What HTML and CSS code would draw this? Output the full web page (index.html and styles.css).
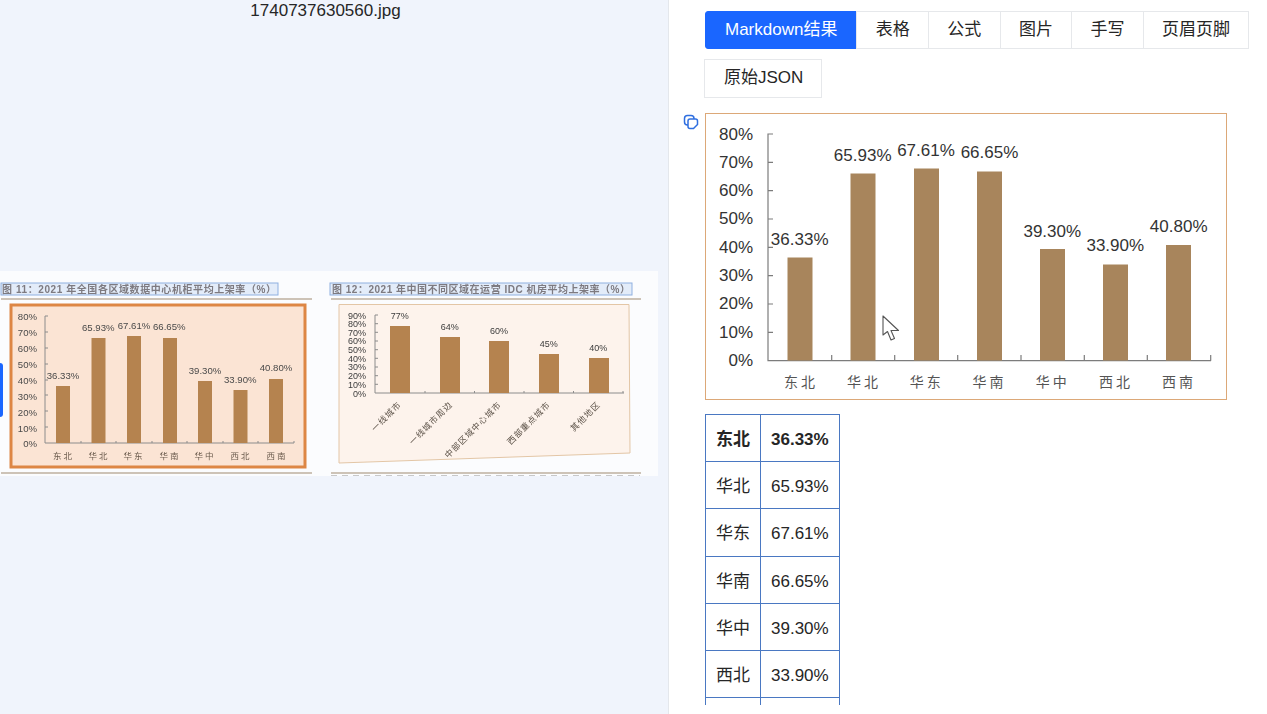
FILE: index.html
```html
<!DOCTYPE html>
<html lang="zh-CN">
<head>
  <meta charset="UTF-8">
  <title>1740737630560.jpg</title>
  <link rel="stylesheet" href="styles.css">
</head>
<body>

  <div class="left">
    <div class="file-name">1740737630560.jpg</div>
    <div class="stage">
      <svg class="page-shot" width="658" height="205" viewBox="0 271 658 205">
        <rect x="0" y="271" width="658" height="205" fill="#fbfcfe"/>

        <!-- 图 11 -->
        <rect class="cap-box" x="1" y="283" width="277" height="12"/>
        <text class="cap" x="2" y="292.5" textLength="274">图 11：2021 年全国各区域数据中心机柜平均上架率（%）</text>
        <line class="rule" x1="1" y1="299" x2="312" y2="299"/>
        <rect x="11" y="305" width="294" height="162" fill="#fbe4d4" stroke="#dd8644" stroke-width="3"/>
        <path class="axis" d="M48 316H45V443H294M45 332H48M45 348H48M45 364H48M45 380H48M45 395H48M45 411H48M45 427H48M81 443V441M116 443V441M152 443V441M187 443V441M223 443V441M258 443V441M294 443V441"/>
        <g class="bar-s">
          <rect x="56" y="386" width="14" height="57"/>
          <rect x="91.5" y="338" width="14" height="105"/>
          <rect x="127" y="336" width="14" height="107"/>
          <rect x="163" y="338" width="14" height="105"/>
          <rect x="198" y="381" width="14" height="62"/>
          <rect x="233.5" y="390" width="14" height="53"/>
          <rect x="269" y="379" width="14" height="64"/>
        </g>
        <g class="num-s end">
          <text x="37" y="320">80%</text>
          <text x="37" y="336">70%</text>
          <text x="37" y="352">60%</text>
          <text x="37" y="368">50%</text>
          <text x="37" y="384">40%</text>
          <text x="37" y="399.500">30%</text>
          <text x="37" y="415.500">20%</text>
          <text x="37" y="431.500">10%</text>
          <text x="37" y="447">0%</text>
        </g>
        <g class="num-s mid">
          <text x="63" y="378.500">36.33%</text>
          <text x="98.300" y="331">65.93%</text>
          <text x="134" y="328.500">67.61%</text>
          <text x="169.300" y="330">66.65%</text>
          <text x="205" y="374">39.30%</text>
          <text x="240.300" y="382.500">33.90%</text>
          <text x="276" y="371">40.80%</text>
        </g>
        <g class="cat-s mid">
          <text x="63.500" y="459">东北</text>
          <text x="99" y="459">华北</text>
          <text x="134" y="459">华东</text>
          <text x="170" y="459">华南</text>
          <text x="205" y="459">华中</text>
          <text x="241" y="459">西北</text>
          <text x="277" y="459">西南</text>
        </g>
        <line class="rule" x1="1" y1="473" x2="312" y2="473"/>

        <!-- 图 12 -->
        <rect class="cap-box" x="330" y="283" width="302" height="12"/>
        <text class="cap" x="332" y="292.500" textLength="298">图 12：2021 年中国不同区域在运营 IDC 机房平均上架率（%）</text>
        <line class="rule" x1="331" y1="299" x2="641" y2="299"/>
        <polygon points="339,304.500 629,304.500 630,453 339,463" fill="#fdf3ec" stroke="#e3c6a6"/>
        <path class="axis" d="M378 315H375V393H624M375 323.700H378M375 332.300H378M375 341H378M375 349.700H378M375 358.300H378M375 367H378M375 375.700H378M375 384.300H378M425 393V391M474.500 393V391M524 393V391M573.500 393V391M623 393V391"/>
        <g class="bar-s">
          <rect x="390" y="326" width="20" height="67"/>
          <rect x="440" y="337" width="20" height="56"/>
          <rect x="489" y="341" width="20" height="52"/>
          <rect x="539" y="354" width="20" height="39"/>
          <rect x="589" y="358" width="20" height="35"/>
        </g>
        <g class="num-t end">
          <text x="366" y="318.500">90%</text>
          <text x="366" y="327">80%</text>
          <text x="366" y="335.700">70%</text>
          <text x="366" y="344.400">60%</text>
          <text x="366" y="353">50%</text>
          <text x="366" y="361.700">40%</text>
          <text x="366" y="370.400">30%</text>
          <text x="366" y="379">20%</text>
          <text x="366" y="387.700">10%</text>
          <text x="366" y="396.500">0%</text>
        </g>
        <g class="num-t mid">
          <text x="399.700" y="319">77%</text>
          <text x="449.700" y="330">64%</text>
          <text x="499" y="333.500">60%</text>
          <text x="548.700" y="347">45%</text>
          <text x="598.300" y="351">40%</text>
        </g>
        <g class="cat-t">
          <text transform="rotate(-45 402 405)" x="402" y="405">一线城市</text>
          <text transform="rotate(-45 453 405)" x="453" y="405">一线城市周边</text>
          <text transform="rotate(-45 502 405)" x="502" y="405">中部区域中心城市</text>
          <text transform="rotate(-45 551 405)" x="551" y="405">西部重点城市</text>
          <text transform="rotate(-45 601 405)" x="601" y="405">其他地区</text>
        </g>
        <line class="rule" x1="331" y1="473" x2="641" y2="473"/>
        <line x1="331" y1="475.500" x2="640" y2="475.500" stroke="#c8c8c8" stroke-dasharray="6 5"/>
      </svg>
    </div>
    <div class="side-tab"></div>
  </div>

  <div class="right">
    <div class="tabs">
      <div class="tab active">Markdown结果</div>
      <div class="tab">表格</div>
      <div class="tab">公式</div>
      <div class="tab">图片</div>
      <div class="tab">手写</div>
      <div class="tab">页眉页脚</div>
      <div class="tab json">原始JSON</div>
    </div>

    <div class="result">
      <svg class="copy-icon" width="16" height="16" viewBox="0 0 16 16">
        <rect x="1.500" y="1.500" width="9.500" height="9.500" rx="3" fill="none" stroke="#2f6fe0" stroke-width="1.500"/>
        <path d="M7 5H12.500A2 2 0 0 1 14.500 7V10.500L10.500 14.500H7A2 2 0 0 1 5 12.500V7A2 2 0 0 1 7 5Z" fill="#fff" stroke="#2f6fe0" stroke-width="1.500"/>
      </svg>

      <svg class="big-chart" width="522" height="287" viewBox="706 114 520 285">
        <path class="axis-b" d="M773 134H768V360.700H1211M768 162.400H773M768 190.700H773M768 219H773M768 247.400H773M768 275.700H773M768 304H773M768 332.400H773M831.700 360.700V355M894.700 360.700V355M957.700 360.700V355M1021 360.700V355M1084.300 360.700V355M1147.300 360.700V355M1210.700 360.700V355"/>
        <g class="bar-b">
          <rect x="787.500" y="257.500" width="25" height="103"/>
          <rect x="850.500" y="173.500" width="25" height="187"/>
          <rect x="914" y="168.500" width="25" height="192"/>
          <rect x="977" y="171.500" width="25" height="189"/>
          <rect x="1040" y="249" width="25" height="111.500"/>
          <rect x="1103" y="264.500" width="25" height="96"/>
          <rect x="1166" y="245" width="25" height="115.500"/>
        </g>
        <g class="num-b end">
          <text x="753" y="139.500">80%</text>
          <text x="753" y="167.500">70%</text>
          <text x="753" y="196">60%</text>
          <text x="753" y="224">50%</text>
          <text x="753" y="252.500">40%</text>
          <text x="753" y="280.500">30%</text>
          <text x="753" y="309">20%</text>
          <text x="753" y="337.500">10%</text>
          <text x="753" y="366">0%</text>
        </g>
        <g class="num-b mid">
          <text x="799.700" y="244.500">36.33%</text>
          <text x="862.700" y="160.500">65.93%</text>
          <text x="926" y="156">67.61%</text>
          <text x="989.500" y="158">66.65%</text>
          <text x="1052.300" y="236.500">39.30%</text>
          <text x="1115.300" y="251">33.90%</text>
          <text x="1178.700" y="231.500">40.80%</text>
        </g>
        <g class="cat-b mid">
          <text x="801" y="387">东北</text>
          <text x="864" y="387">华北</text>
          <text x="926.700" y="387">华东</text>
          <text x="989.500" y="387">华南</text>
          <text x="1052.700" y="387">华中</text>
          <text x="1116" y="387">西北</text>
          <text x="1179" y="387">西南</text>
        </g>
      </svg>

      <table class="data">
        <tr><th>东北</th><th>36.33%</th></tr>
        <tr><td>华北</td><td>65.93%</td></tr>
        <tr><td>华东</td><td>67.61%</td></tr>
        <tr><td>华南</td><td>66.65%</td></tr>
        <tr><td>华中</td><td>39.30%</td></tr>
        <tr><td>西北</td><td>33.90%</td></tr>
        <tr><td></td><td></td></tr>
      </table>
    </div>
  </div>

  <svg class="cursor" width="20" height="28" viewBox="0 0 20 28">
    <path d="M1 1V20L5.500 16.500L9 25L12.500 23.500L9 15.500L16.500 15.500Z" fill="#fff" stroke="#555" stroke-width="1.100" stroke-linejoin="round"/>
  </svg>

</body>
</html>
```

FILE: styles.css
```css
* {
  box-sizing: border-box;
}

html, body {
  height: 100%;
}

body {
  margin: 0;
  display: flex;
  overflow: hidden;
  position: relative;
  background: #fff;
  color: #262626;
  font-family: "Liberation Sans", "Noto Sans CJK SC", sans-serif;
}

.left {
  width: 669px;
  flex-shrink: 0;
  display: flex;
  flex-direction: column;
  position: relative;
  background: #f0f4fc;
  border-right: 1px solid #e4e7ec;
}

.file-name {
  height: 20px;
  padding-right: 17px;
  text-align: center;
  font-size: 17px;
  line-height: 22px;
}

.stage {
  flex: 1;
  padding-top: 251px;
}

.page-shot {
  display: block;
  filter: blur(0.35px);
}

.side-tab {
  position: absolute;
  left: 0;
  top: 363px;
  width: 3px;
  height: 54px;
  background: #1a66ff;
  border-radius: 0 4px 4px 0;
}

/* charts inside the scanned page */
.cap-box {
  fill: #e3ecf9;
  stroke: #8fb0e0;
}

.cap {
  font-size: 10px;
  font-weight: 700;
  fill: #7d7a80;
}

.rule {
  stroke: #a08a70;
  stroke-width: 1.2;
}

.axis {
  fill: none;
  stroke: #8c8c8c;
}

.bar-s {
  fill: #b5834f;
}

.end {
  text-anchor: end;
}

.mid {
  text-anchor: middle;
}

.num-s {
  font-size: 9.6px;
  fill: #4a4a4a;
}

.cat-s {
  font-size: 8.500px;
  letter-spacing: 2px;
  fill: #6a5a4c;
}

.num-t {
  font-size: 9px;
  fill: #3c3c3c;
}

.cat-t {
  font-size: 8.500px;
  letter-spacing: 1px;
  text-anchor: end;
  fill: #5c5248;
}

/* right side */
.right {
  flex: 1;
  height: 705px;
  overflow: hidden;
  padding: 11px 15px 0 35px;
}

.tabs {
  display: flex;
  flex-wrap: wrap;
  row-gap: 10px;
}

.tab {
  height: 38px;
  margin-left: -1px;
  padding: 0 18.300px;
  border: 1px solid #e6e8eb;
  background: #fff;
  font-size: 17px;
  line-height: 36px;
}

.tab.active {
  margin-left: 1px;
  padding: 0 19px;
  background: #1a66ff;
  border-color: #1a66ff;
  border-radius: 3px 0 0 3px;
  color: #fff;
}

.tab.json {
  height: 39px;
  margin-left: 0;
  padding: 0 18px 0 19px;
}

.result {
  position: relative;
  margin-top: 15px;
  padding-left: 1px;
}

.copy-icon {
  position: absolute;
  left: -21px;
  top: 1px;
}

.big-chart {
  display: block;
  background: #fff;
  border: 1px solid #dca878;
}

.axis-b {
  fill: none;
  stroke: #7c7c7c;
  stroke-width: 1.2;
}

.bar-b {
  fill: #a8855c;
}

.num-b {
  font-size: 17px;
  fill: #333;
}

.cat-b {
  font-size: 14px;
  letter-spacing: 3px;
  fill: #555;
}

.data {
  margin-top: 14px;
  border-collapse: collapse;
  font-size: 17px;
  line-height: 24px;
}

.data th, .data td {
  height: 47.200px;
  padding: 13px 10px 0;
  border: 1px solid #4a78c2;
  text-align: left;
  vertical-align: baseline;
  font-weight: 400;
}

.data th {
  font-weight: 700;
}

.cursor {
  position: absolute;
  left: 882px;
  top: 315px;
}
```
